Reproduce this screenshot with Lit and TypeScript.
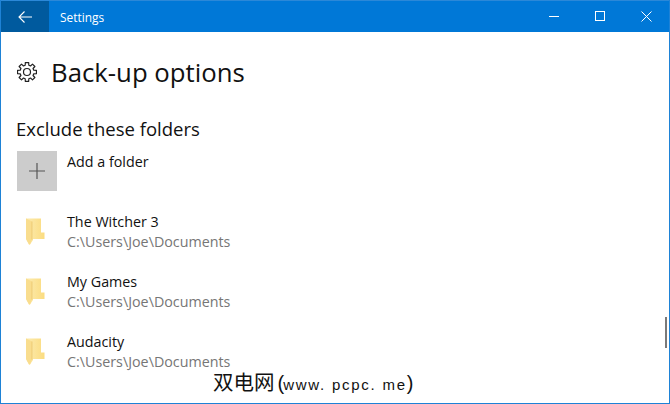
import { LitElement, html, css, svg } from "lit";
import { customElement } from "lit/decorators.js";

const folders = ["The Witcher 3", "My Games", "Audacity"];

const gearPath = (() => {
  const pts: string[] = [];
  const p = (r: number, deg: number) => {
    const a = (deg * Math.PI) / 180;
    return `${(10 + r * Math.sin(a)).toFixed(2)} ${(10 - r * Math.cos(a)).toFixed(2)}`;
  };
  for (let i = 0; i < 8; i++) {
    const c = i * 45;
    pts.push(p(7, c - 15), p(9.6, c - 10), p(9.6, c + 10), p(7, c + 15));
  }
  return "M" + pts.join("L") + "Z";
})();

const folderIcon = svg`<svg class="folder" width="19" height="27" viewBox="0 0 19 27">
  <defs><linearGradient id="fg" x1="0" y1="0" x2="1" y2="0"><stop offset="0" stop-color="#fcebb0"/><stop offset="1" stop-color="#fbdc80"/></linearGradient></defs>
  <path d="M0 .5H15V14.5H18.5V21H7V22L4 26.5H3L0 21Z" fill="url(#fg)"/>
  <path d="M0 .5L6 3.5V21.5L4 26.5H3L0 21Z" fill="#f9dd8e"/>
  <path d="M6 3.5V21.5" stroke="#e6bf62" stroke-width="1" opacity=".6"/>
</svg>`;

@customElement("app-root")
export class AppRoot extends LitElement {
  static styles = css`
    :host { display: block; width: 670px; height: 404px; font-family: "Open Sans", "Noto Sans", sans-serif; }
    .win { position: relative; box-sizing: border-box; width: 670px; height: 404px; background: #fff; border: 1px solid #1e82d6; border-top: 0; overflow: hidden; }
    .bar { height: 32px; margin: 0 -1px; padding-right: 1px; background: #0078d7; color: #fff; display: flex; align-items: center; border-top: 1px solid #2b88d8; box-sizing: border-box; }
    .back { width: 49px; height: 31px; background: #005a9e; display: flex; align-items: center; justify-content: center; }
    .title { margin-left: 11px; font-size: 11.9px; line-height: 16px; }
    .controls { margin-left: auto; display: flex; align-self: flex-start; }
    .ctl { width: 46px; height: 30px; display: flex; align-items: center; justify-content: center; }
    .body { padding: 0 0 0 16px; }
    .head { display: flex; align-items: center; margin-top: 21px; height: 38px; }
    .gear { width: 20px; height: 20px; margin-right: 14px; }
    h1 { margin: 0; font-weight: 400; font-size: 25.75px; line-height: 38px; color: #111; }
    h2 { margin: 26px 0 0 -1px; font-weight: 400; font-size: 18.5px; line-height: 24px; color: #111; }
    .add { display: flex; margin-top: 10px; height: 40px; }
    .tile { width: 40px; height: 40px; background: #cccccc; display: flex; align-items: center; justify-content: center; }
    .name { font-size: 14.3px; line-height: 20px; color: #111; }
    .path { font-size: 14.3px; line-height: 20px; color: #767676; }
    .add .name { margin: 1px 0 0 10px; }
    .row { display: flex; height: 40px; margin-top: 20px; }
    .ico { width: 38px; display: flex; align-items: center; justify-content: center; padding-top: 1px; padding-right: 2px; box-sizing: border-box; }
    .txt { margin: 1px 0 0 12px; }
    .thumb { position: absolute; left: 664px; top: 317px; width: 2px; height: 31px; background: #7a7a7a; }
    .mark { position: absolute; left: 212px; top: 368px; font-family: "Noto Sans CJK SC", "Liberation Sans", sans-serif; font-size: 20.5px; line-height: 26px; color: #111; white-space: nowrap; display: flex; align-items: baseline; }
    .mark .u { font-family: "Liberation Sans", sans-serif; font-size: 15px; letter-spacing: 1.75px; }
    .mark .p { font-family: "Liberation Sans", sans-serif; font-size: 20px; font-weight: 400; }
    .mark .open { margin-left: 3px; margin-right: -1px; }
  `;

  render() {
    return html`<div class="win">
      <div class="bar">
        <div class="back"><svg width="14" height="12" viewBox="0 0 14 12" fill="none" stroke="#fff" stroke-width="1.1"><path d="M1 6H14M6.5 .5L1 6L6.5 11.5"/></svg></div>
        <div class="title">Settings</div>
        <div class="controls">
          <div class="ctl"><svg width="10" height="10" viewBox="0 0 10 10"><path d="M0 5.5H10" stroke="#fff"/></svg></div>
          <div class="ctl"><svg width="10" height="10" viewBox="0 0 10 10" fill="none"><rect x=".5" y=".5" width="9" height="9" stroke="#fff"/></svg></div>
          <div class="ctl"><svg width="11" height="11" viewBox="0 0 11 11" fill="none"><path d="M.5 .5L10.5 10.5M10.5 .5L.5 10.5" stroke="#fff"/></svg></div>
        </div>
      </div>
      <div class="body">
        <div class="head">
          <svg class="gear" viewBox="0 0 20 20" fill="none" stroke="#222" stroke-width="1.2" stroke-linejoin="round">
            <path d=${gearPath}/>
            <circle cx="10" cy="10" r="3.5"/>
          </svg>
          <h1>Back-up options</h1>
        </div>
        <h2>Exclude these folders</h2>
        <div class="add">
          <div class="tile"><svg width="16" height="16" viewBox="0 0 16 16"><path d="M8 0V16M0 8H16" stroke="#555" stroke-width="1.2"/></svg></div>
          <div class="name">Add a folder</div>
        </div>
        ${folders.map((f) => html`<div class="row">
          <div class="ico">${folderIcon}</div>
          <div class="txt"><div class="name">${f}</div><div class="path">C:\\Users\\Joe\\Documents</div></div>
        </div>`)}
      </div>
      <div class="thumb"></div>
      <div class="mark">双电网<span class="p open">(</span><span class="u">www. pcpc. me</span><span class="p">)</span></div>
    </div>`;
  }
}
